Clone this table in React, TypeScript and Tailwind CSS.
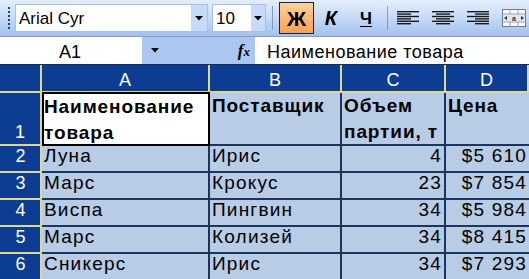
import React from "react";

function Tri() {
  return (
    <svg width="8" height="5" viewBox="0 0 8 5">
      <path d="M0 0 H8 L4 4.5 Z" fill="#000" />
    </svg>
  );
}

function AlignIcon({ kind }: { kind: "left" | "center" | "right" }) {
  const rows = [0, 1, 2, 3, 4, 5];
  return (
    <svg width="22" height="14" viewBox="0 0 22 14">
      {rows.map((i) => {
        const long = i % 2 === 0;
        const w = long ? 22 : 14;
        const x = kind === "left" ? 0 : kind === "right" ? 22 - w : (22 - w) / 2;
        return <rect key={i} x={x} y={i * 2.4} width={w} height="1.4" fill="#1a1a1a" />;
      })}
    </svg>
  );
}

function MergeIcon() {
  return (
    <svg width="24" height="18" viewBox="0 0 24 18">
      <rect x="0.5" y="0.5" width="23" height="17" fill="#fff" stroke="#6b7a90" />
      <line x1="0" y1="5" x2="24" y2="5" stroke="#8a98ad" />
      <line x1="0" y1="13" x2="24" y2="13" stroke="#8a98ad" />
      <line x1="8" y1="0" x2="8" y2="5" stroke="#8a98ad" />
      <line x1="16" y1="0" x2="16" y2="5" stroke="#8a98ad" />
      <line x1="8" y1="13" x2="8" y2="18" stroke="#8a98ad" />
      <line x1="16" y1="13" x2="16" y2="18" stroke="#8a98ad" />
      <rect x="1" y="6" width="22" height="6" fill="#dfe6f0" />
      <path d="M2 9 L5 7 V11 Z" fill="#333" />
      <path d="M22 9 L19 7 V11 Z" fill="#333" />
      <text x="12" y="11.5" fontSize="7" fontWeight="bold" textAnchor="middle" fill="#333" fontFamily="Liberation Sans, sans-serif">a</text>
    </svg>
  );
}

const cols = ["A", "B", "C", "D"];
const data: [string, string, string, string][] = [
  ["Луна", "Ирис", "4", "$5 610"],
  ["Марс", "Крокус", "23", "$7 854"],
  ["Виспа", "Пингвин", "34", "$5 984"],
  ["Марс", "Колизей", "34", "$8 415"],
  ["Сникерс", "Ирис", "34", "$7 293"],
];

const HDR = "bg-[#0c3d92] border-r-2 border-b-2 border-[#dcd98e] text-white flex justify-center text-[18px] leading-none";
const HEADTXT = "text-[19px] font-bold leading-[26px] tracking-[0.9px] whitespace-nowrap";

export default function App() {
  return (
    <div className="w-[529px] h-[279px] overflow-hidden bg-white font-['Liberation_Sans',Arial,sans-serif] text-black">
      {/* Toolbar */}
      <div className="h-[37px] flex items-center bg-gradient-to-b from-[#e4eefc] via-[#c6daf8] to-[#a4c0ec] border-b border-[#7f9dc9]">
        <div className="w-[14px] h-full flex flex-col items-center justify-center gap-[2px] pl-[4px]">
          {[0, 1, 2, 3, 4, 5].map((i) => (
            <div key={i} className="w-[2px] h-[2px] bg-[#27417a]" />
          ))}
        </div>
        <div className="ml-[1px] w-[193px] h-[28px] bg-white border border-[#a9c1e6] flex items-center">
          <span className="flex-1 pl-[3px] text-[17px] leading-none">Arial Cyr</span>
          <div className="w-[16px] h-full bg-[#c7dafa] flex items-center justify-center">
            <Tri />
          </div>
        </div>
        <div className="ml-[4px] w-[54px] h-[28px] bg-white border border-[#a9c1e6] flex items-center">
          <span className="flex-1 pl-[3px] text-[17px] leading-none">10</span>
          <div className="w-[14px] h-full bg-[#c7dafa] flex items-center justify-center">
            <Tri />
          </div>
        </div>
        <div className="ml-[6px] w-[1px] h-[24px] bg-[#7f9dc9]" />
        <div className="ml-[6px] w-[35px] h-[32px] border border-[#0a246a] bg-gradient-to-b from-[#fdd39a] to-[#f7a04f] flex items-center justify-center text-[21px] font-bold leading-none">
          Ж
        </div>
        <div className="ml-[8px] w-[18px] text-center text-[20px] font-bold italic leading-none">
          К
        </div>
        <div className="ml-[17px] w-[18px] text-center text-[17px] font-bold leading-none underline underline-offset-2">
          Ч
        </div>
        <div className="ml-[12px] w-[1px] h-[24px] bg-[#7f9dc9]" />
        <div className="ml-[9px] flex items-center">
          <AlignIcon kind="left" />
        </div>
        <div className="ml-[13px] flex items-center">
          <AlignIcon kind="center" />
        </div>
        <div className="ml-[13px] flex items-center">
          <AlignIcon kind="right" />
        </div>
        <div className="ml-[13px] flex items-center">
          <MergeIcon />
        </div>
      </div>

      {/* Formula bar */}
      <div className="h-[27px] flex bg-[#abc7f0]">
        <div className="w-[142px] h-full bg-white flex items-center justify-center text-[18px] leading-none pr-[2px] pt-[2px]">
          A1
        </div>
        <div className="w-[113px] h-full flex items-center">
          <div className="ml-[9px]">
            <Tri />
          </div>
          <span className="ml-auto mr-[5px] text-[17px] italic font-bold font-['Liberation_Serif',serif] leading-none">
            f<span className="text-[13px]">x</span>
          </span>
        </div>
        <div className="flex-1 h-full bg-white flex items-center pl-[12px] pt-[3px] text-[18px] leading-none tracking-[0.5px]">
          Наименование товара
        </div>
      </div>

      {/* Grid */}
      <div className="grid grid-cols-[42px_168px_132px_104px_83px] grid-rows-[28px_53px_27px_27px_27px_27px_27px] border-t border-[#1b2c4a]">
        <div className="bg-[#0c3d92] border-r-2 border-b-2 border-[#dcd98e]" />
        {cols.map((c) => (
          <div key={c} className={HDR + " items-start pt-[6px]"}>
            {c}
          </div>
        ))}

        {/* Row 1 */}
        <div className={HDR + " items-end pb-[3px]"}>1</div>
        <div className={"bg-white border-2 border-black -mt-[1px] " + HEADTXT}>
          Наименование
          <br />
          товара
        </div>
        <div className={"bg-[#b8cce6] border-r-2 border-b-2 border-[#1d355c] pl-[2px] " + HEADTXT}>
          Поставщик
        </div>
        <div className={"bg-[#b8cce6] border-r-2 border-b-2 border-[#1d355c] pl-[2px] " + HEADTXT}>
          Объем
          <br />
          партии, т
        </div>
        <div className={"bg-[#b8cce6] border-b-2 border-[#1d355c] pl-[2px] " + HEADTXT}>Цена</div>

        {data.map((row, ri) => (
          <React.Fragment key={ri}>
            <div className={HDR + " items-start pt-[1px] pl-[1px]"}>{ri + 2}</div>
            {row.map((v, ci) => (
              <div
                key={ci}
                className={
                  "bg-[#b8cce6] border-b-2 border-[#1d355c] flex items-start text-[19px] leading-none tracking-[1.2px] whitespace-nowrap " +
                  (ci < 3 ? "border-r-2 " : "") +
                  (ci >= 2 ? "justify-end pr-[2px]" : "pl-[2px]")
                }
              >
                {v}
              </div>
            ))}
          </React.Fragment>
        ))}
      </div>
    </div>
  );
}
